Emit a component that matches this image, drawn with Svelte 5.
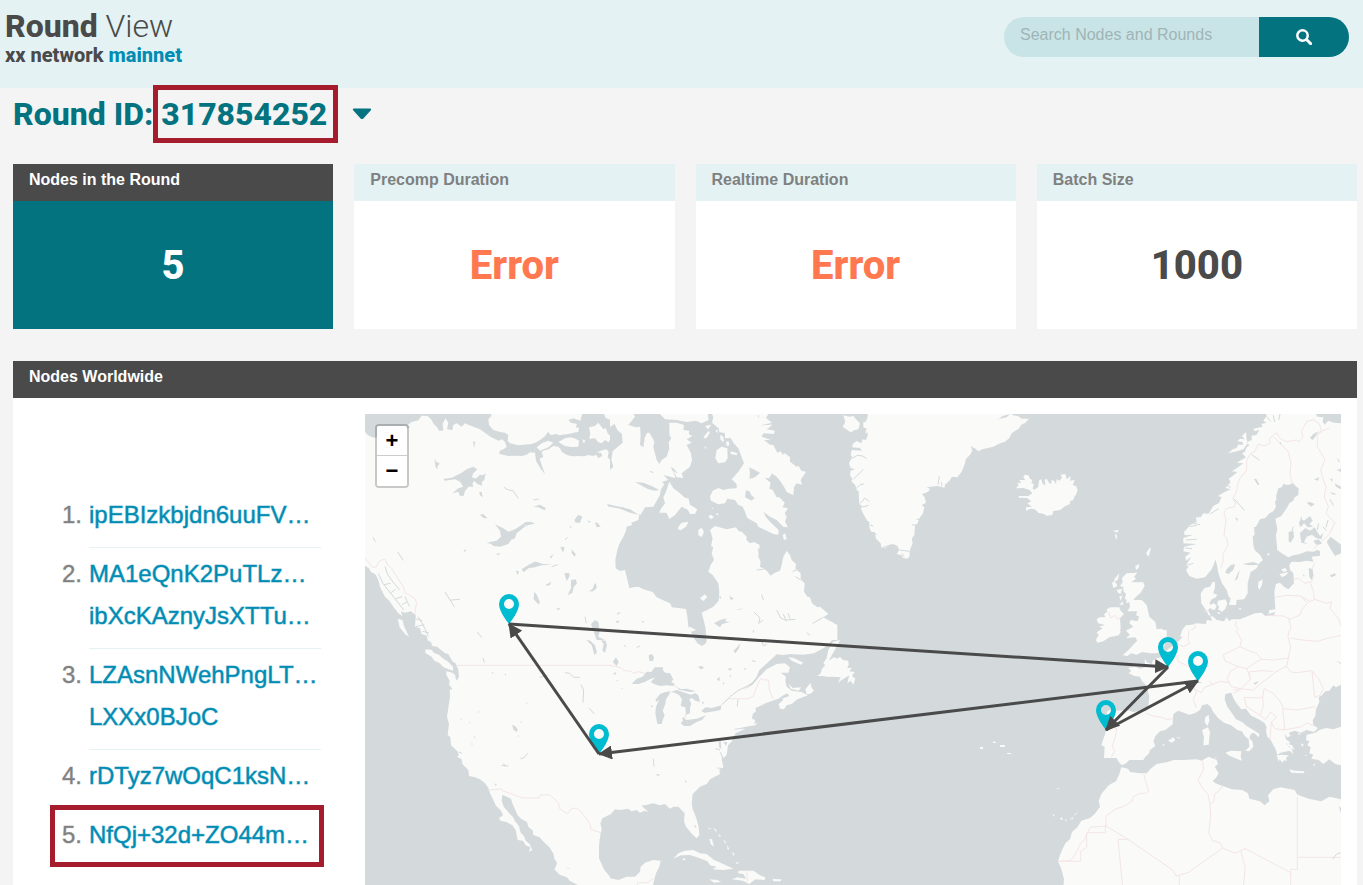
<script>
  const stats = [
    { label: 'Nodes in the Round', value: '5', kind: 'primary' },
    { label: 'Precomp Duration', value: 'Error', kind: 'error' },
    { label: 'Realtime Duration', value: 'Error', kind: 'error' },
    { label: 'Batch Size', value: '1000', kind: '' }
  ];

  const nodes = [
    ['ipEBIzkbjdn6uuFV…'],
    ['MA1eQnK2PuTLz…', 'ibXcKAznyJsXTTu…'],
    ['LZAsnNWehPngLT…', 'LXXx0BJoC'],
    ['rDTyz7wOqC1ksN…'],
    ['NfQj+32d+ZO44m…']
  ];

  const pins = [
    [509, 624],
    [1168, 667],
    [1198, 681],
    [1106, 730],
    [599, 754]
  ];

  const hops = [
    [509, 624, 1168, 667],
    [1168, 667, 1106, 730],
    [1106, 730, 1198, 681],
    [1198, 681, 599, 754],
    [599, 754, 509, 624]
  ];

  // Map sheets. Each has its own grid, three units to one map unit.
  const sheets = [
    {
      // Western Canada
      x: 365, y: 410, w: 245, h: 230, vx: 0,
      land: 'M0 0H750V720H0Z',
      water:
        'M0 0H750V180L742 172 735 150 728 142 731 126 725 118 712 121 700 125 694 134 685 138 668 135 660 139 640 138 622 139 605 135 590 125 586 116 580 110 565 108 552 117 535 122 530 126 535 140 524 146 530 165 540 193 527 176 513 153 510 128 495 127 485 134 470 138 450 137 430 138 402 131 405 122 418 116 425 110 420 97 412 88 400 92 385 85 376 80 365 72 345 58 325 50 310 44 300 40 290 50 275 40 265 45 262 60 246 58 250 38 241 25 233 42 235 62 222 62 215 50 206 42 200 30 188 18 170 17 160 31 140 36 127 46 136 50 112 66 95 66 70 75 30 83 20 81 8 75 0 65Z' +
        'M0 467L12 475 18 486 31 493 40 510 45 530 50 541 60 560 73 572 85 590 100 610 112 618 108 604 120 608 138 604 152 616 150 650 165 655 170 672 185 677 188 690 206 720H0Z' +
        'M235 207L260 203 290 188 306 177 325 170 337 178 325 190 320 201 332 206 345 194 355 196 362 188 358 210 350 217 352 227 337 222 328 213 322 220 325 230 310 230 300 244 296 257 285 258 280 245 262 250 280 235 295 230 285 215 270 208 240 212Z' +
        'M390 343L415 355 430 365 450 358 470 345 482 336 500 336 510 342 480 345 470 358 455 370 450 385 438 390 430 402 405 410 385 408 378 402 365 398 395 392 408 380 405 362Z' +
        'M470 478L490 465 508 455 520 457 530 461 560 464 530 466 510 472 490 475 476 487Z' +
        'M345 314L354 312 368 325 355 324ZM628 330L640 314 652 320 645 338 632 338ZM690 336L699 340 707 350 695 352ZM725 283L750 284V292L732 291ZM342 246L350 246 353 262 345 256ZM208 146L214 156 224 160 217 170 219 178 212 172ZM324 94L331 96 327 114ZM505 290L525 284 542 294 539 301 520 292ZM618 510L632 508 636 520 626 532 622 548 608 556 618 534ZM671 544L683 536 690 518 696 532 684 544ZM598 490L612 488 614 498 605 514ZM620 418L632 432 630 441 620 430ZM586 410L599 412 594 428ZM542 524L558 516 556 524 545 528ZM508 545L516 556 524 575 522 584 506 568ZM573 596L587 593 580 601ZM452 482L462 484 458 496ZM678 642L690 630 700 636 704 664 700 680 720 690 722 720H705L690 676ZM690 128L708 128 712 138 700 144ZM392 432L406 430 400 436ZM555 440L566 432 558 446ZM667 332L677 333 673 338ZM295 422L302 416 301 426Z',
      isles:
        'M380 0L379 18 370 28 372 45 385 60 405 66 420 68 430 75 428 92 435 100 460 106 500 102 514 97 525 90 538 80 550 65 556 75 575 72 582 76 610 72 640 65 642 54 632 52 636 42 617 38 610 30 625 25 646 32 655 0Z' +
        'M672 52L690 48 700 38 715 58 722 54 728 70 740 82 731 97 720 90 710 100 700 97 690 85 672 86 676 72ZM580 96L600 85 616 82 632 86 642 92 640 110 620 111 600 108ZM515 112L530 100 550 92 565 98 550 112 525 122ZM712 0L722 24 737 30 735 44 750 48V0Z' +
        'M44 506L60 498 72 520 90 540 104 556 118 580 128 602 118 600 108 584 92 562 76 552 62 534ZM98 626L112 630 118 650 132 680 120 672 104 652ZM652 88L662 92 656 100Z',
      streams:
        'M40 490L54 520 74 546 98 576 116 600M60 470L68 494 84 516 104 540M56 524L76 520M78 548L92 538M92 566L112 560M110 584L126 576M120 560L134 590M150 626L172 632M152 650L178 644M172 664L192 668M160 620L176 648 190 680M417 232L430 240 444 242 460 266M240 546L268 590M258 570L284 568M98 426L115 451M24 382L31 395M337 666L350 683M505 270L522 267M560 470L578 464M600 390L608 382M615 348L619 354M650 656L668 654M660 620L664 640M692 522L690 540M470 355L500 338',
      borders: 'M0 443L22 472 35 470 42 455 50 450 60 448 68 465 80 475 95 500 115 530 120 548 150 565 155 580 150 600 150 620'
    },
    {
      // Hudson Bay, Baffin Island, Labrador
      x: 610, y: 410, w: 250, h: 230, vx: 0,
      land:
        'M0 0H65L75 20 55 45 78 52 90 50 92 75 90 105 100 112 104 84 110 70 118 68 128 85 133 95 130 112 140 150 148 162 155 150 170 140 178 115 176 97 184 85 178 75 178 38 200 38 222 45 220 60 238 62 236 72 247 78 230 88 245 98 230 105 243 130 246 150 240 170 215 190 220 204 200 202 190 182 205 192 190 175 182 172 192 190 196 204 180 200 160 195 175 210 155 216 163 222 152 240 150 255 130 290 105 292 92 314 60 306 40 292 28 290 88 314 85 330 64 338 66 345 50 350 48 362 40 380 28 402 22 420 16 450 17 475 30 483 45 480 50 500 58 535 70 532 85 530 100 538 128 546 140 562 180 580 186 592 228 597 232 620 235 650 255 690 272 712 290 690 286 650 275 608 310 590 326 572 328 545 325 520 308 495 295 485 302 464 312 450 305 430 310 412 303 408 308 385 300 360 315 348 350 358 378 352 385 362 396 366 410 380 409 390 420 400 432 396 449 405 445 440 452 455 450 470 470 482 482 497 492 490 510 482 515 465 520 440 530 423 540 436 545 450 558 462 556 476 572 490 572 508 584 520 582 545 592 560 600 562 606 580 622 592 630 590 655 612 640 622 682 645 682 690 660 705 640 720H0Z' +
        'M178 215L190 235 210 250 222 262 236 266 240 284 262 298 255 312 240 312 234 300 215 290 195 315 178 327 170 308 148 308 152 298 165 280 160 262 168 245Z' +
        'M302 0L310 22 306 38 326 55 328 66 345 70 345 85 362 84 370 98 385 115 402 160 385 185 365 208 380 222 380 235 356 236 340 240 326 234 308 242 300 260 303 272 325 283 345 280 352 266 375 270 384 284 398 290 405 305 412 324 440 340 445 350 490 372 505 374 506 360 480 335 468 322 460 305 480 320 500 330 520 350 534 352 525 335 530 320 524 310 534 295 518 292 524 278 508 262 500 262 488 240 478 236 482 218 465 205 478 204 486 190 500 200 510 212 522 230 530 246 550 256 552 232 560 220 576 224 572 210 588 185 574 182 566 168 560 170 540 155 540 142 525 130 518 134 512 124 502 128 490 105 480 104 462 90 482 90 455 80 460 70 492 72 494 62 470 58 488 44 452 46 486 38 468 24 482 0Z' +
        'M150 12L160 0H292L296 30 275 40 258 32 230 36 200 30 165 28ZM320 120L335 110 352 115 353 145 345 157 325 160 316 145ZM205 350L215 338 235 335 228 350 212 361 204 358ZM265 360L275 353 282 365 275 382 265 375ZM232 657L240 650 258 660 245 665ZM270 565L285 553 292 562 280 573ZM280 82L296 62 300 68 288 86ZM362 124L382 130 380 136 362 132ZM295 318L304 314 312 322 302 328ZM315 312L324 310 326 316ZM285 48L304 44 294 58ZM348 95L356 94 358 106 350 108ZM330 74L340 80 342 96 332 90ZM283 110L288 110 288 118ZM518 375L526 370 530 388 522 390ZM316 60L324 60 322 70ZM304 294L310 293 308 298Z',
      water:
        'M0 50L14 42 22 60 36 72 38 98 22 112 8 124 4 150 10 170 0 180ZM418 172L430 178 450 188 440 198 430 204 418 206 420 190ZM408 240L420 245 424 256 434 264 425 272 405 262ZM75 216L100 218 125 228 148 240 132 242 112 236ZM152 112L160 118 158 136 150 134ZM0 284L28 290 60 298 86 314 60 308 30 296 0 290ZM468 426L476 420 474 432ZM312 640L330 630 350 625 345 634 360 636 336 642 330 652ZM380 600L400 594 388 600ZM358 558L372 566 362 570ZM16 634L30 632 22 640ZM20 610L34 606 24 614ZM94 632L104 635 98 638ZM330 556L334 566 328 564Z',
      isles: '',
      streams:
        'M432 606L450 624 446 640 460 630M500 600L512 624 530 632M520 612L528 630 556 628M534 610L540 626M608 640L640 622M455 554L460 570M120 184L130 188M430 660V668M444 415L450 440M440 480L460 478M556 500L572 510M460 700L468 710M378 716L390 706M40 710H48M75 716L90 708M590 668L600 676M444 16L446 22M560 480L548 484M0 58L10 62',
      borders: ''
    },
    {
      // Greenland and Iceland
      x: 830, y: 410, w: 250, h: 160, vx: 30,
      land:
        'M145 0L142 24 136 36 130 36 130 52 140 56 136 70 144 74 138 90 128 88 124 100 110 93 98 102 97 112 120 114 126 122 95 120 92 134 96 140 87 160 92 174 105 178 92 182 90 194 97 208 94 214 106 226 110 240 116 244 118 282 126 288 122 294 130 312 142 332 148 336 148 352 154 366 164 366 168 386 182 400 184 412 196 414 208 406 220 402 232 408 238 420 230 432 246 436 248 443 262 446 268 440 270 420 278 400 275 386 283 375 285 345 292 342 298 325 308 312 313 292 305 286 318 278 314 262 306 252 325 245 330 236 320 232 350 228 365 230 373 234 376 222 386 216 396 200 412 202 425 185 435 160 438 146 450 135 457 122 453 108 466 116 476 124 486 118 520 110 540 100 555 95 568 84 575 70 596 56 604 44 616 38 627 26 605 26 594 18 578 16 572 0Z' +
        'M70 16L88 20 100 18 110 30 120 40 115 58 104 60 92 67 68 50 76 36Z' +
        'M588 235L596 226 592 218 604 220 598 210 616 210 610 202 614 194 625 196 630 206 637 210 634 220 642 222 638 235 642 240 654 232 658 210 664 208 668 222 676 226 674 210 680 206 688 220 694 222 694 210 702 212 708 222 710 208 718 212 726 204 722 194 736 192 740 208 752 198 750 212 764 210 758 225 768 228 773 240 768 255 764 258 760 270 750 274 750 282 736 288 720 300 700 303 697 315 680 317 672 312 655 308 645 298 632 296 618 302 618 292 636 290 622 280 634 274 622 264 597 263 596 258 625 258 637 250 628 240 610 234Z',
      water: 'M533 30L548 18 570 12 560 22 540 26Z',
      isles: '',
      streams:
        'M94 146L112 136 128 138 140 146M100 208L130 178M108 236L120 224 132 222M122 280L134 264 148 274M124 292L146 286M358 198L354 224M364 216L366 228M298 328L290 328M276 345H290M384 214L390 220M122 16L138 34M150 345L160 348M164 370L170 374M190 412L214 404M240 420L268 424M252 440L246 430M132 70H144',
      borders: ''
    },
    {
      // Scandinavia, the Baltic and the British Isles
      x: 1080, y: 410, w: 261, h: 220, vx: 0,
      land:
        'M555 0L560 18 550 32 560 38 544 42 548 50 520 56 524 64 538 60 530 74 514 78 516 90 500 96 508 106 500 112 494 126 486 130 498 142 470 158 490 160 474 172 456 184 472 186 458 198 446 206 452 216 436 234 452 238 434 246 414 258 425 262 416 280 400 288 385 312 370 310 362 322 348 322 350 336 332 344 312 366 314 376 340 374 310 384 310 400 350 402 312 410 310 424 332 428 316 440 318 452 334 440 318 466 326 470 318 480 328 498 350 506 375 502 395 478 402 462 406 448 412 470 415 490 426 520 440 540 446 560 452 565 447 585 468 585 470 570 492 568 503 550 503 520 512 486 530 475 536 462 549 450 540 435 524 420 520 405 518 380 524 374 522 352 528 350 540 328 556 324 568 310 580 304 588 290 585 276 590 268 588 260 595 235 605 232 610 222 624 225 640 220 646 228 656 235 655 255 644 262 640 272 628 280 620 295 604 318 586 326 590 345 592 360 588 374 590 400 592 420 605 430 625 442 640 436 660 432 680 424 700 425 712 420 720 424 720 437 695 440 700 455 680 452 660 456 635 455 628 465 630 480 640 490 642 520 625 538 612 530 600 518 588 522 583 545 585 580 586 598 568 600 566 612 586 606 580 618 556 618 545 608 525 610 510 616 480 628 455 628 448 634 440 622 432 634 410 630 400 620 385 615 378 600 368 586 364 580 362 550 374 534 390 530 398 516 405 516 405 530 400 550 412 554 408 562 395 568 388 580 394 592 384 600 390 612 396 632 380 630 378 642 350 640 330 645 318 646 308 658 302 690H783V0Z' +
        'M140 490L172 488 162 500 168 506 154 517 190 517 194 528 182 548 168 560 160 570 185 570 200 585 208 620 226 636 230 658 246 656 254 664 256 690H150L136 690 158 674 150 660 138 662 160 650 148 640 152 630 172 634 178 620 168 615 172 604 142 604 150 590 148 576 138 580 140 570 134 566 138 552 130 544 130 532 120 528 128 516 126 504Z' +
        'M50 628L58 622 76 622 72 612 82 606 80 598 92 592 118 592 122 602 132 612 120 624 122 655 116 676 88 682 60 698 48 690 65 674 52 668 68 654 56 650 75 645 54 640Z' +
        'M445 130L458 118 470 114 474 104 490 104 488 96 472 94 480 86 494 88 486 78 498 66 500 90 504 98 490 118 470 124ZM414 572L436 568 442 580 436 596 426 606 414 598 418 590 412 584ZM390 584L402 580 410 588 404 600 394 598ZM535 516L548 508 546 524 538 540 534 532ZM598 492L626 486 618 496 606 502ZM604 478L616 474 622 482 610 486ZM100 524L104 506 118 490 114 508 104 516ZM96 516L108 518 112 528 100 534ZM110 540L126 536 122 552 114 548ZM118 560L128 556 122 572ZM198 430L210 412 212 418 206 440ZM166 468L178 462 176 474 168 480ZM98 362L116 360 112 368ZM104 370L112 378 108 390ZM474 596L484 594 482 600ZM560 432L570 430 566 438ZM412 606L424 610 414 612ZM118 584L128 574 130 584Z',
      water:
        'M740 395L752 380 762 388 783 404V430L765 438 752 418ZM440 478L452 466 465 462 460 480 445 492 436 488ZM480 480L472 508 464 512 472 492ZM702 0H783V40L762 38 744 32 735 44 728 36 730 22 712 20ZM690 84L700 72 715 64 706 80 698 90ZM686 474L698 478 700 496 694 510 688 500ZM750 496L764 490 768 496 754 502ZM522 208L528 206 538 222 534 226ZM680 278L690 276 704 282 694 290ZM764 220L783 230 783 238 768 230ZM750 206L758 206 756 216ZM770 180L783 176V186ZM656 340L664 326 672 332 690 318 698 332 688 342 700 350 684 352 672 340 664 350ZM660 370L676 354 690 362 704 352 712 366 720 378 730 368 724 388 708 384 696 374 680 380 672 396 684 402 664 398ZM700 392L716 388 726 402 708 404ZM626 366L640 362 642 380 632 398 626 394ZM464 322L474 326 472 334ZM488 462L520 456 540 464 506 466ZM668 494L674 494 672 500ZM748 246L770 252 760 254ZM702 208L718 202 714 212Z',
      isles: '',
      streams:
        'M515 134L538 150M463 268L480 286 494 302M505 530L510 560M600 96L604 104M664 320L660 350M716 340L712 360M728 350L740 362M744 330L738 352M640 350L636 362M560 20L572 34M580 16L584 36M600 12L596 30M340 340L360 344M318 390L350 388M314 414L336 416M390 312L416 296M750 268L760 286M772 146L778 156M320 466L340 460M330 350L350 346M440 225L452 232M535 62L520 72',
      borders:
        'M422 475L430 450 428 435 444 405 440 385 432 375 438 330 432 310 440 295 465 290 466 278 458 265 470 245 472 225 480 205 500 180 500 150 512 130 524 125 535 102 552 108 570 100 570 84 590 68 600 85 620 95 650 90 658 95 668 82 665 62 680 35 700 28 718 42 724 60 712 75 712 110 735 150 722 180 730 210 738 232 733 260 745 290 738 310 764 338 750 370 700 418M580 80L605 105 625 125 633 160 630 190 637 222M712 75L728 62 748 55M640 508L655 505 675 520 695 515 700 500 695 480 704 458M586 562L620 556 662 558 690 575 704 568 700 545 692 520M662 558L682 580 665 600 660 615 630 628 612 618 560 616M704 568L740 580 755 575 750 595 775 625 783 648M625 622L632 650 630 690M470 634L465 645 476 660M86 606L92 624 104 616 112 628 126 620M372 604L386 602M340 642L348 652 330 662'
    },
    {
      // United States and Mexico, west
      x: 365, y: 640, w: 245, h: 245, vx: 0,
      land:
        'M186 0L198 6 202 18 216 20 240 40 250 42 262 64 272 70 276 80 280 90 282 112 274 122 270 104 262 98 244 94 244 104 254 122 252 134 262 146 254 150 255 170 252 190 246 230 252 252 248 284 256 292 258 316 276 332 282 346 276 350 290 358 292 372 310 390 312 408 330 412 345 418 360 430 370 444 376 462 384 478 392 496 408 512 414 526 402 534 406 542 424 546 442 556 452 570 458 600 474 602 482 616 496 622 492 636 502 630 494 612 482 602 478 590 466 576 462 558 450 544 444 532 428 514 416 500 410 482 412 464 438 476 442 490 452 512 458 526 470 538 486 546 490 560 504 572 504 584 524 592 534 604 552 620 566 642 568 656 576 668 572 682 568 688 584 704 606 712 614 722 640 736H750V0Z' +
        'M180 30L188 28 200 30 208 40 222 44 232 54 250 66 264 80 264 92 250 88 236 82 224 70 208 62 200 50 182 40Z',
      water:
        'M750 515L738 522 712 535 706 550 710 568 704 596 702 620 702 655 710 672 718 690 735 710 750 714ZM441 255L450 258 458 268 456 276 446 270ZM380 96L386 98 382 102ZM419 101L424 103 421 108ZM340 213L344 216 340 218ZM287 234L291 238 288 240ZM312 246L317 249 312 250ZM484 186L488 190 484 192ZM460 286L464 288 460 290ZM467 243L470 247 467 250ZM326 288L332 292 328 294ZM319 310L324 312 320 315ZM388 430L396 434 392 438ZM431 510L440 514 436 522ZM446 508L454 520 452 526ZM664 0L676 2 690 16 696 38 688 44 680 16ZM708 0L722 2 726 16 720 38 712 32 716 12ZM606 684L616 686 608 687ZM745 98L750 96V106Z',
      isles: '',
      streams:
        'M232 34L260 64M275 96L276 110M600 98L614 100 626 112 644 112M648 134L656 150 654 188M672 204L688 222M524 112L548 106M466 356L476 354 488 340M410 376L430 378M416 370L420 380M354 54L358 68M280 336L292 340M744 60V78',
      borders:
        'M276 76H750M370 450L410 447 412 452 474 474H522L526 465H554L580 488 584 506 608 521 620 505H638L652 520 674 550 678 568 712 580'
    },
    {
      // Great Lakes, the Atlantic seaboard and the Caribbean
      x: 610, y: 640, w: 250, h: 245, vx: 0,
      land:
        'M0 0H666L654 16 640 25 612 40 580 44 540 42 520 45 500 43 492 50 465 75 448 90 440 110 425 130 400 150 428 134 448 110 470 88 500 72 525 70 540 82 535 98 512 98 528 110 526 124 530 140 545 152 574 156 594 166 562 178 545 192 530 196 522 208 510 206 506 192 520 180 516 176 538 168 532 160 520 166 505 176 488 182 470 188 450 198 436 204 438 214 428 222 426 236 436 240 432 252 442 246 436 256 420 258 400 262 380 275 370 290 366 304 354 316 350 345 340 354 334 340 336 362 340 382 328 390 330 402 300 418 290 432 270 440 248 462 245 490 248 508 258 532 266 560 268 585 260 595 246 582 228 560 222 544 224 520 205 500 190 500 180 506 165 492 150 496 130 490 105 496 94 496 102 504 116 516 104 512 90 518 80 510 64 514 55 506 30 510 15 508 0 525Z' +
        'M0 715L25 720 50 710 75 710 90 695 92 680 105 668 130 660 152 662 148 680 138 700 134 714 128 740H0Z' +
        'M690 0L680 20 664 48 656 62 672 52 682 56 690 50 698 60 715 62 716 74 712 84 726 84 718 94 734 96 726 108 736 116 730 134 722 122 712 130 718 106 704 114 684 128 692 112 670 110 650 110 640 108 622 108 632 100 636 86 646 76 640 70 650 54 655 30 668 6ZM590 162L586 148 602 128 604 142 612 152 600 162ZM536 132L548 144 574 142 566 152 542 146ZM535 52L552 54 580 68 572 74 545 62ZM370 274L388 266 406 266 376 280Z' +
        'M190 656L205 640 225 632 250 630 270 640 290 642 312 660 340 672 370 686 340 690 308 688 320 680 300 676 292 664 270 655 240 645 212 646ZM366 718L382 712 408 716 400 702 384 700 386 692 430 692 450 706 466 712 464 720 436 718 418 732 398 722ZM298 718L322 720 334 726 312 728ZM488 717L514 718 512 724 490 724ZM298 596L306 598 312 620 302 612ZM216 658L224 654 226 662ZM306 562L318 568 320 578 310 564ZM292 566L304 564 300 568ZM324 582L332 586 330 592ZM340 598L348 606 346 612ZM352 616L358 628 352 628ZM366 636L374 642 370 648ZM376 668L390 666 380 672Z',
      water:
        'M65 132L80 116 98 110 110 95 124 96 134 82 160 82 158 90 166 98 180 100 190 118 184 126 194 132 190 138 170 136 150 138 132 132 122 126 136 112 120 118 104 126 86 132Z' +
        'M150 162L166 156 182 154 176 166 168 178 166 192 158 212 164 226 158 240 155 252 142 252 136 220 138 200 148 178 140 186 136 180Z' +
        'M182 156L200 150 218 156 242 164 258 160 266 168 270 186 256 182 246 174 238 178 244 192 240 202 240 220 228 224 226 202 212 198 216 178 208 166 194 158ZM202 148L230 146 258 154 240 156Z' +
        'M212 250L224 236 230 240 260 236 288 226 276 240 260 246 240 258 222 258ZM274 214L286 202 306 204 334 196 332 210 314 214 284 218ZM116 46L126 42 132 52 128 64 118 62ZM256 0H290L288 10 276 18 262 10ZM8 66L18 52 26 66 20 78ZM10 100L20 96 14 106ZM34 144L40 146 36 148ZM18 120L26 122 22 124ZM264 80L276 78 282 84 272 88ZM320 118L330 110 328 124ZM352 86L366 84 362 92ZM358 106L364 106 362 112ZM424 60L440 64 430 66ZM402 84L410 86 404 90ZM338 126L344 130 340 134ZM370 34L388 14 392 10 386 26 376 40ZM276 184L284 188 278 192ZM122 196L130 198 124 202ZM252 556L260 558 256 564ZM216 234L224 232 220 242ZM326 304L332 302 334 326 328 324ZM340 306L352 306 348 318ZM224 420L230 424 228 430ZM136 402L152 404 144 408Z',
      isles: '',
      streams:
        'M336 194L360 170 384 152 412 138 428 128M384 178L382 200M316 326L330 330M330 336L336 348M130 356L132 380M80 22L90 18M42 16L48 20M456 4L460 18 470 12M322 384L340 386M205 144L212 150M374 268L400 264M574 122L582 112',
      borders:
        'M0 76L30 82 44 92 60 93 72 100 84 95 108 101M190 134L210 150M228 222L222 240M336 194L354 176H414L430 168 440 140 452 116 462 120 476 120 478 150 490 178M82 735V728H112L130 716M410 694L412 724'
    },
    {
      // Central and southern Europe, north Africa
      x: 1040, y: 630, w: 301, h: 255, vx: 0,
      land:
        'M176 14L170 8 188 -8H238L242 6 236 16 208 22 190 34 172 38 168 30Z' +
        'M278 -8L258 2 270 14 258 24 286 22 292 32 278 46 268 58 248 76 262 78 274 70 290 74 306 66 330 70 350 70 368 64 360 56 376 44 372 30 380 24V-8Z' +
        'M428 -8L424 8 420 20 428 20 412 38 402 46 386 56 374 68 372 80 352 84 338 92 336 102 322 98 314 86 316 112 300 116 286 110 264 114 274 122 266 130 284 138 300 140 304 150 312 160 326 172 322 176 328 200 324 236 318 244 300 242 280 246 262 240 232 242 216 236 200 246 204 262 200 290 196 310 188 334 184 346 194 350 192 384 214 384 230 384 236 396 246 406 258 400 268 390 296 390 310 390 316 380 326 372 330 360 346 348 340 334 346 318 360 304 376 300 398 283 400 252 414 242 432 248 448 254 464 250 480 240 486 226 502 222 512 230 520 246 534 264 552 278 574 286 592 300 606 304 614 318 626 328 628 350 616 362 628 364 640 350 638 336 628 324 632 312 642 308 656 322 658 312 640 300 620 288 606 276 588 268 572 244 562 230 554 208 556 192 574 188 580 204 588 218 604 238 618 236 632 256 660 270 674 280 680 292 678 304 682 320 692 330 700 345 708 360 712 376 724 374 746 376 738 384 740 394 732 390 728 398 718 388 716 396 710 376 722 368 748 362 760 372 754 354 740 344 752 338 738 328 734 312 742 322 752 318 746 308 764 302 782 308 800 300 822 306 834 294 820 286 818 270 826 258 828 238 838 216 836 202 846 196 856 184 868 182 880 166 888 172 903 164V-8Z' +
        'M903 290L880 298 858 294 838 300 826 308 800 314 798 330 808 334 802 346 812 352 808 370 820 374 814 386 836 390 850 402 868 388 886 402 903 406Z' +
        'M556 368L572 362 604 364 602 380 606 392 584 384 566 376ZM486 300L504 292 510 306 506 344 490 346 492 322ZM496 262L506 254 508 274 502 288 494 276ZM748 418L764 422 794 424 790 430 754 428ZM384 332L400 322 406 330 396 338ZM408 322L418 322 420 326ZM366 344L374 342 372 348ZM738 340L756 346 764 360 746 350ZM820 404L826 400 822 410ZM774 308L784 312 776 314ZM782 340L792 344 786 350ZM796 374L802 376 796 378ZM50 474L60 476 54 478Z' +
        'M70 770L72 748 64 716 54 694 62 670 76 640 90 628 96 606 112 592 124 572 150 564 164 552 180 530 176 512 184 492 206 466 228 454 238 432 244 412 264 416 270 426 300 430 320 430 332 416 350 402 384 396 400 390 430 390 470 388 484 392 506 380 530 390 534 402 524 410 536 430 528 444 518 452 526 460 554 470 576 478 606 480 624 490 628 506 660 514 674 526 688 514 684 496 700 478 722 472 764 480 772 494 806 506 844 514 868 500 903 508V770Z' +
        'M38 556L42 552 44 560ZM58 566L66 562 68 570ZM74 570L80 568 80 574ZM90 568L100 560 98 568ZM102 556L114 546 106 556Z',
      water: 'M640 160L658 152 646 164ZM888 92L903 98V102ZM896 528L903 534V550ZM476 154L486 158 478 160Z',
      isles: '',
      streams: 'M878 688L890 672 903 668',
      borders:
        'M448 -5L444 30 450 40 430 50 410 40 398 56M382 70L410 76 416 96 440 106 476 112 470 140 462 176 470 186 460 206 468 232M318 250L340 258 366 262 380 268 400 266M204 290L230 296 226 320 216 350 224 362 214 382M462 176L484 188 494 172 516 164 540 154 568 158 562 146 572 124 594 110 554 92 550 74 600 50 604 30 588 0M600 50L626 62 650 70 664 88 642 100 620 116 594 110M508 152L516 164M568 158L574 170 602 176 632 148 620 116M664 88L700 90 745 84 752 52 744 20 748 0M745 84L740 108 706 126 690 140 668 156 640 180 600 176 580 180M632 148L626 126 664 122 700 124M740 108L752 126 770 128 816 122 836 146 850 176 840 196 824 202 816 124M752 24L786 30 832 34 866 24 903 16M580 190L602 178M612 202L620 230 660 256M612 202L650 204 668 202 670 230 660 256 676 268M668 202L672 176 700 190 722 216 730 236 770 240 826 230M676 268L692 246 710 262 694 276 690 330M694 276L704 296 734 300 784 290 802 278 820 288M734 300L732 272 728 236M312 432L316 452 326 482 318 490 300 490 280 500 276 514 250 530 228 536 198 558V588L264 628 366 698 400 722 408 738 444 728 506 684 548 654 586 670 602 662 616 656 752 728M198 588L150 592 134 628 122 640 106 672 92 692 56 694H122V664L140 652V608H196V588M264 628H234L248 770M418 738V770M602 662L616 712 610 770M752 770V718H772V500M772 682H903M488 392L490 420 474 450 490 478 504 492 510 524 512 560 506 608 518 632 540 638 548 654M510 524L522 514 524 492 544 476 546 468M528 380L526 390M800 300L784 308'
    }
  ];
</script>

<div class="page">
  <header>
    <div class="brand">
      <h1><b>Round</b> View</h1>
      <p>xx network <span>mainnet</span></p>
    </div>
    <form class="search" onsubmit={(e) => e.preventDefault()}>
      <input type="text" aria-label="Search Nodes and Rounds" placeholder="Search Nodes and Rounds" />
      <button type="submit" aria-label="Search">
        <svg width="16" height="16" viewBox="0 0 16 16" aria-hidden="true">
          <circle cx="6.5" cy="6.5" r="5.2" fill="none" stroke="#fff" stroke-width="2.5" />
          <path d="M10.5 10.5L14.6 14.6" stroke="#fff" stroke-width="2.9" stroke-linecap="round" />
        </svg>
      </button>
    </form>
  </header>

  <main>
    <div class="round">
      <h2>Round ID: <span class="marked id">317854252</span></h2>
      <button type="button" class="toggle" aria-label="Show round details">
        <svg width="20" height="12" viewBox="0 0 20 12" aria-hidden="true">
          <path d="M2 0.5H18Q20 1 18.6 2.6L11.4 10.4Q10 11.6 8.6 10.4L1.4 2.6Q0 1 2 0.5Z" fill="#03737f" />
        </svg>
      </button>
    </div>

    <section class="stats">
      {#each stats as s}
        <article class={s.kind}>
          <h3>{s.label}</h3>
          <p>{s.value}</p>
        </article>
      {/each}
    </section>

    <section class="world">
      <h3>Nodes Worldwide</h3>
      <div class="body">
        <ol>
          {#each nodes as lines, i}
            <li class:marked={i === 4}>
              <span class="num">{i + 1}.</span>
              <a href="#node-{i + 1}">
                {#each lines as line}<span>{line}</span>{/each}
              </a>
            </li>
          {/each}
        </ol>
        <div class="map">
          <svg class="chart" viewBox="365 414 976 471" preserveAspectRatio="xMinYMin slice" role="img" aria-label="Node locations">
            <defs>
              <marker id="head" viewBox="0 0 14 14" refX="13" refY="7" markerWidth="14" markerHeight="14" markerUnits="userSpaceOnUse" orient="auto">
                <path d="M0 0L14 7L0 14Z" fill="#4a4a4a" />
              </marker>
            </defs>
            {#each sheets as t}
              <svg x={t.x} y={t.y} width={t.w} height={t.h} viewBox="{t.vx} 0 {t.w * 3} {t.h * 3}">
                <rect x={t.vx} width={t.w * 3} height={t.h * 3} fill="#d4dadc" />
                <path d={t.land} fill="#fafaf8" />
                <path d={t.borders} fill="none" stroke="#f4e5e7" stroke-width="3" stroke-linejoin="round" />
                <path d={t.water} fill="#d4dadc" />
                <path d={t.isles} fill="#fafaf8" />
                <path d={t.streams} fill="none" stroke="#d4dadc" stroke-width="3" />
              </svg>
            {/each}
            <path d="M980 747h3v2h-3zM993 741l4 2h-4zM1000 745h5v2h-5zM1007 753h4v1h-4z" fill="#fafaf8" />
            {#each pins as [x, y]}
              <path
                transform="translate({x} {y})"
                d="M0 0C-3-4-10-13-10-20A10 10 0 0 1 10-20C10-13 3-4 0 0ZM0-25a5 5 0 1 0 0 10a5 5 0 1 0 0-10Z"
                fill="#00bcd1"
                fill-rule="evenodd"
              />
            {/each}
            {#each hops as [x1, y1, x2, y2]}
              <line {x1} {y1} {x2} {y2} stroke="#4a4a4a" stroke-width="3" marker-end="url(#head)" />
            {/each}
          </svg>
          <div class="zoom">
            <button type="button" aria-label="Zoom in">+</button>
            <button type="button" aria-label="Zoom out">−</button>
          </div>
        </div>
      </div>
    </section>
  </main>
</div>

<style>
  :global(body) {
    margin: 0;
    background: #f4f4f4;
  }
  .page {
    display: flex;
    flex-direction: column;
    min-height: 100vh;
    font-family: 'Liberation Sans', Arial, sans-serif;
    color: #4a4a4a;
  }
  h1, h2, h3, p, ol {
    margin: 0;
    padding: 0;
  }
  button {
    border: 0;
    padding: 0;
    cursor: pointer;
  }
  header {
    display: flex;
    justify-content: space-between;
    align-items: flex-start;
    box-sizing: border-box;
    min-height: 88px;
    padding: 8px 14px 0 5px;
    background: #e4f2f3;
  }
  .brand {
    font-family: Roboto, sans-serif;
  }
  h1 {
    font-size: 32px;
    line-height: 36px;
    font-weight: 300;
  }
  h1 b {
    font-weight: 800;
  }
  .brand p {
    font-size: 20px;
    line-height: 22px;
    font-weight: 800;
  }
  .brand p span {
    color: #008cb3;
  }
  .search {
    display: flex;
    height: 40px;
    margin-top: 9px;
    border-radius: 20px;
    overflow: hidden;
  }
  .search input {
    box-sizing: border-box;
    width: 255px;
    border: 0;
    padding: 0 16px 4px;
    background: #c9e4e6;
    color: #4a4a4a;
    font: 16px 'Liberation Sans', Arial, sans-serif;
  }
  .search input::placeholder {
    color: #9fb4b6;
    opacity: 1;
  }
  .search button {
    display: grid;
    place-items: center;
    width: 90px;
    background: #03737f;
  }
  main {
    flex: 1;
    display: flex;
    flex-direction: column;
    padding: 0 6px 0 13px;
  }
  .round {
    display: flex;
    align-items: center;
    gap: 25px;
    height: 52px;
    margin-bottom: 24px;
  }
  h2 {
    font-family: Roboto, sans-serif;
    font-size: 32px;
    line-height: 40px;
    font-weight: 800;
    color: #03737f;
  }
  .toggle {
    background: none;
    display: flex;
  }
  .marked {
    position: relative;
  }
  .marked::after {
    content: '';
    position: absolute;
    border: 5px solid #a51c2d;
    pointer-events: none;
  }
  .id::after {
    inset: -10px -11px -10px -8px;
  }
  .stats {
    display: grid;
    grid-template-columns: repeat(4, 1fr);
    gap: 21px;
    margin-bottom: 32px;
  }
  article {
    background: #fff;
  }
  h3 {
    box-sizing: border-box;
    height: 37px;
    padding: 6px 16px;
    font-size: 16px;
    line-height: 20px;
    font-weight: 700;
    background: #e4f2f3;
    color: #7f8080;
  }
  article p {
    padding-top: 2px;
    font-family: Roboto, sans-serif;
    font-size: 40px;
    line-height: 126px;
    font-weight: 800;
    text-align: center;
  }
  .primary {
    background: #03737f;
  }
  .primary p {
    color: #fff;
  }
  .error p {
    color: #ff7850;
  }
  .primary h3, .world h3 {
    background: #4a4a4a;
    color: #fff;
  }
  .world {
    flex: 1;
    display: flex;
    flex-direction: column;
    background: #fff;
  }
  .body {
    flex: 1;
    display: flex;
    padding: 16px 16px 0 0;
  }
  ol {
    flex: none;
    box-sizing: border-box;
    width: 352px;
    padding: 80px 44px 0 49px;
    list-style: none;
    font-size: 24px;
    line-height: 42px;
  }
  li {
    display: flex;
    gap: 7px;
    margin-bottom: 5px;
  }
  .num {
    flex: none;
    width: 20px;
    color: #7f8080;
    -webkit-text-stroke: 1px rgba(127, 128, 128, 0.4);
  }
  li a {
    flex: 1;
    padding-bottom: 11px;
    border-bottom: 1px solid #e4f2f3;
    color: #008cb3;
    text-decoration: none;
    -webkit-text-stroke: 1px rgba(0, 140, 179, 0.5);
  }
  li:nth-last-child(-n + 2) a {
    border-color: transparent;
  }
  li:last-child,
  li:last-child a {
    margin: 0;
    padding: 0;
    border: 0;
  }
  li a span {
    display: block;
  }
  li.marked::after {
    inset: -9px -3px -11px -12px;
  }
  .map {
    position: relative;
    flex: 1;
    min-width: 0;
    background: #d4dadc;
    overflow: hidden;
  }
  .chart {
    position: absolute;
    inset: 0;
    width: 100%;
    height: 100%;
  }
  .zoom {
    position: absolute;
    top: 10px;
    left: 10px;
    border: 2px solid rgba(0, 0, 0, 0.2);
    border-radius: 4px;
    background-clip: padding-box;
  }
  .zoom button {
    display: block;
    width: 30px;
    height: 30px;
    background: #fff;
    color: #000;
    font: bold 22px/30px 'Liberation Sans', Arial, sans-serif;
  }
  .zoom button:first-child {
    border-bottom: 1px solid #ccc;
    border-radius: 2px 2px 0 0;
  }
  .zoom button:last-child {
    border-radius: 0 0 2px 2px;
  }
</style>
